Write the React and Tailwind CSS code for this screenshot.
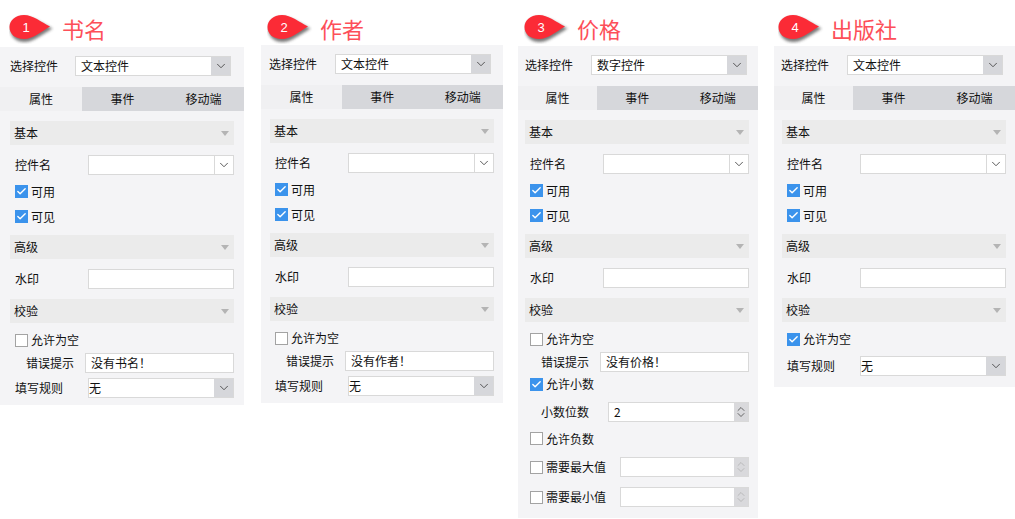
import { ChevronDown, ChevronUp, Check } from "lucide-react";

const font = { fontFamily: '"Noto Sans CJK SC", "Liberation Sans", sans-serif' };

function Badge({ n }) {
  return (
    <svg width="54" height="32" viewBox="0 0 54 32" className="shrink-0">
      <defs>
        <filter id={`blur${n}`} x="-20%" y="-20%" width="140%" height="140%">
          <feGaussianBlur stdDeviation="1.5" />
        </filter>
      </defs>
      <path d="M15 3 C24 3 33 10 43 14.5 C33 20 24 28 15 28 C6 28 1 22 1 15.5 C1 9 6 3 15 3 Z" fill="#333" opacity="0.65" filter={`url(#blur${n})`} transform="translate(0.5 2)" />
      <path d="M15 3 C24 3 32 10 41 14.5 C32 20 24 27 15 27 C6 27 0.5 22 0.5 15 C0.5 9 6 3 15 3 Z" fill="#fb2b36" />
      <text x="17" y="20" textAnchor="middle" fill="#fff" fontSize="13" fontWeight="400" style={{ fontFamily: '"Liberation Sans", sans-serif' }}>{n}</text>
    </svg>
  );
}

function Arrow({ grey, border }) {
  return (
    <div className={`flex h-full w-[19px] items-center justify-center ${grey ? "bg-[#d6d7db]" : "bg-white"} ${border ? "border-l border-[#d9d9d9]" : ""}`}>
      <ChevronDown size={14} strokeWidth={1.5} className="text-[#444]" />
    </div>
  );
}

function Box({ className = "", children, text }) {
  return (
    <div className={`flex h-5 items-stretch border border-[#d9d9d9] bg-white ${className}`}>
      <span className="flex-1 overflow-hidden whitespace-nowrap pl-[5px] text-[12px] leading-[18px] text-[#111]">{text}</span>
      {children}
    </div>
  );
}

function Spin({ on }) {
  const c = on ? "text-[#333]" : "text-[#aaa]";
  return (
    <div className="flex h-full w-[14px] flex-col items-center justify-center bg-[#d9d9dc]">
      <ChevronUp size={14} strokeWidth={1.4} className={`-mb-[3px] ${c}`} />
      <ChevronDown size={14} strokeWidth={1.4} className={`-mt-[3px] ${c}`} />
    </div>
  );
}

function CheckRow({ label, on, className = "" }) {
  return (
    <div className={`flex items-center gap-[3px] pl-[5px] text-[12px] text-[#111] ${className}`}>
      {on ? (
        <span className="flex h-[13px] w-[13px] items-center justify-center bg-[#3b93ec]">
          <Check size={11} strokeWidth={3} className="text-white" />
        </span>
      ) : (
        <span className="h-[13px] w-[13px] border border-[#a3a3a3] bg-white" />
      )}
      <span>{label}</span>
    </div>
  );
}

function Section({ title, className = "" }) {
  return (
    <div className={`flex h-6 items-center justify-between bg-[#ebebeb] pl-[4px] pr-[5px] text-[12px] text-[#111] ${className}`}>
      <span>{title}</span>
      <span className="mt-[1px] h-0 w-0 border-x-[4px] border-t-[5px] border-x-transparent border-t-[#b4b4b4]" />
    </div>
  );
}

function Panel({ n, title, head, body, sel, selClass, tabW, width, inner, children }) {
  return (
    <div className={`shrink-0 ${width}`}>
      <div className={`flex items-start pt-[12px] ${head}`}>
        <Badge n={n} />
        <span className="-ml-[1px] whitespace-nowrap text-[22px] leading-[32px] text-[#fd4f59]">{title}</span>
      </div>
      <div className={`bg-[#f4f4f6] ${body}`}>
        <div className={`flex h-5 items-center text-[12px] text-[#111] ${selClass}`}>
          <span className="shrink-0">选择控件</span>
          <Box text={sel} className="ml-auto w-[156px]"><Arrow grey /></Box>
        </div>
        <div className="mt-[11px] flex h-6 items-center bg-[#d6d7db] text-[12px] text-[#111]">
          <span className={`flex h-full items-center justify-center bg-[#f0f0f2] ${tabW}`}>属性</span>
          <span className="flex-1 text-center">事件</span>
          <span className="flex-1 text-center">移动端</span>
        </div>
        <div className={`w-[224px] pt-[10px] ${inner}`}>
          <Section title="基本" />
          <div className="mt-[10px] flex h-5 items-center justify-between text-[12px] text-[#111]">
            <span className="pl-[5px]">控件名</span>
            <Box className="w-[146px]"><Arrow border /></Box>
          </div>
          <CheckRow label="可用" on className="mt-[4px] h-[25px]" />
          <CheckRow label="可见" on className="h-[25px]" />
          <Section title="高级" className="mt-[6px]" />
          <div className="mt-[10px] flex h-5 items-center justify-between text-[12px] text-[#111]">
            <span className="pl-[5px]">水印</span>
            <Box className="w-[146px]" />
          </div>
          <Section title="校验" className="mt-[10px]" />
          {children}
        </div>
      </div>
    </div>
  );
}

function ErrorRow({ text }) {
  return (
    <div className="flex h-5 items-center justify-between text-[12px] text-[#111]">
      <span className="pl-[16px]">错误提示</span>
      <Box text={text} className="w-[149px]" />
    </div>
  );
}

function RuleRow({ className = "" }) {
  return (
    <div className={`flex h-5 items-center justify-between text-[12px] text-[#111] ${className}`}>
      <span className="pl-[5px]">填写规则</span>
      <Box text="无" className="w-[146px] [&>span]:pl-0"><Arrow grey /></Box>
    </div>
  );
}

export default function App() {
  return (
    <div className="flex h-[519px] w-[1015px] items-start overflow-hidden bg-white" style={font}>
      <Panel n={1} title="书名" width="w-[244px]" head="h-[47px] pl-[9px]" body="pt-[9px] pb-[7px]" sel="文本控件" selClass="pl-[10px] pr-[13px]" tabW="w-[82px]" inner="ml-[10px]">
        <CheckRow label="允许为空" className="mt-[4px] h-[26px]" />
        <ErrorRow text="没有书名！" />
        <RuleRow className="mt-[5px]" />
      </Panel>
      <div className="w-[17px] shrink-0" />
      <Panel n={2} title="作者" width="w-[242px]" head="h-[45px] pl-[6px]" body="pt-[9px] pb-[7px]" sel="文本控件" selClass="pl-[8px] pr-[12px]" tabW="w-[81px]" inner="ml-[9px]">
        <CheckRow label="允许为空" className="mt-[4px] h-[26px]" />
        <ErrorRow text="没有作者！" />
        <RuleRow className="mt-[5px]" />
      </Panel>
      <div className="w-[15px] shrink-0" />
      <Panel n={3} title="价格" width="w-[240px]" head="h-[46px] pl-[6px]" body="pt-[9px] pb-[11px]" sel="数字控件" selClass="pl-[7px] pr-[11px]" tabW="w-[79px]" inner="ml-[7px]">
        <CheckRow label="允许为空" className="mt-[4px] h-[26px]" />
        <ErrorRow text="没有价格！" />
        <CheckRow label="允许小数" on className="mt-[1px] h-[22px]" />
        <div className="mt-[7px] flex h-5 items-center justify-between text-[12px] text-[#111]">
          <span className="pl-[16px]">小数位数</span>
          <Box text="2" className="w-[141px]"><Spin on /></Box>
        </div>
        <CheckRow label="允许负数" className="mt-[4px] h-[25px]" />
        <div className="mt-[6px] flex h-5 items-center justify-between">
          <CheckRow label="需要最大值" />
          <Box className="w-[129px]"><Spin /></Box>
        </div>
        <div className="mt-[10px] flex h-5 items-center justify-between">
          <CheckRow label="需要最小值" />
          <Box className="w-[129px]"><Spin /></Box>
        </div>
      </Panel>
      <div className="w-[16px] shrink-0" />
      <Panel n={4} title="出版社" width="w-[241px]" head="h-[46px] pl-[4px]" body="pt-[9px] pb-[11px]" sel="文本控件" selClass="pl-[7px] pr-[12px]" tabW="w-[79px]" inner="ml-[8px]">
        <CheckRow label="允许为空" on className="mt-[4px] h-[26px]" />
        <RuleRow className="mt-[4px]" />
      </Panel>
    </div>
  );
}
